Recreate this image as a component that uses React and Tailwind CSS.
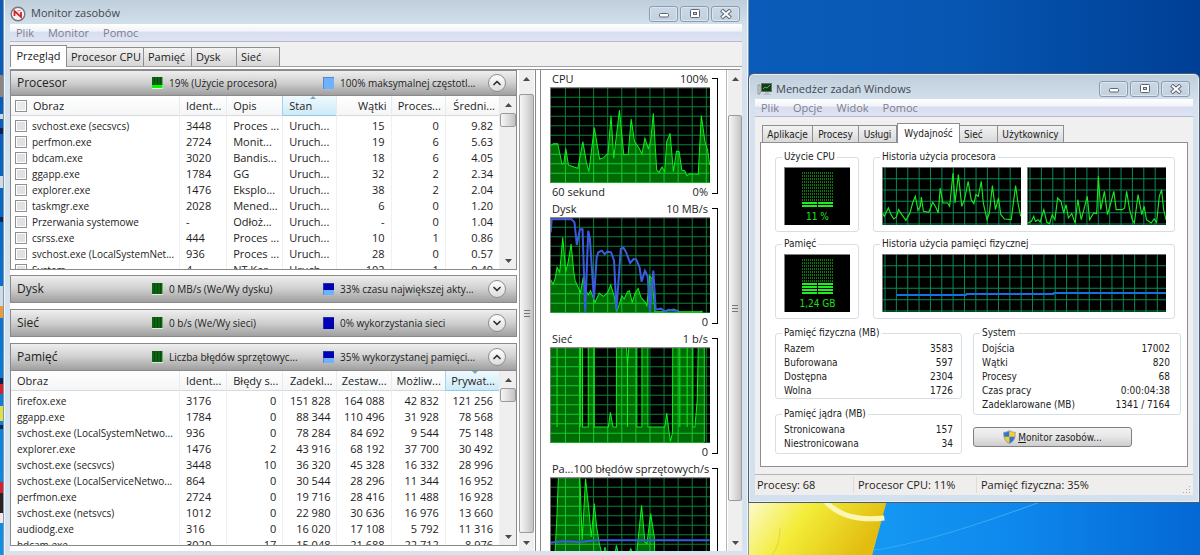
import React from 'react';
import { ChevronUp, ChevronDown } from 'lucide-react';
import clsx from 'clsx';

const processes = [
    ['svchost.exe (secsvcs)', '3448', 'Proces ...', 'Uruch...', '15', '0', '9.82'],
    ['perfmon.exe', '2724', 'Monit...', 'Uruch...', '19', '6', '5.63'],
    ['bdcam.exe', '3020', 'Bandis...', 'Uruch...', '18', '6', '4.05'],
    ['ggapp.exe', '1784', 'GG', 'Uruch...', '32', '2', '2.34'],
    ['explorer.exe', '1476', 'Eksplo...', 'Uruch...', '38', '2', '2.04'],
    ['taskmgr.exe', '2028', 'Mened...', 'Uruch...', '6', '0', '1.20'],
    ['Przerwania systemowe', '-', 'Odłoż...', 'Uruch...', '-', '0', '1.04'],
    ['csrss.exe', '444', 'Proces ...', 'Uruch...', '10', '1', '0.86'],
    ['svchost.exe (LocalSystemNet...', '936', 'Proces ...', 'Uruch...', '28', '0', '0.57'],
    ['System', '4', 'NT Ker...', 'Uruch...', '102', '1', '0.49'],
];

const memory = [
    ['firefox.exe', '3176', '0', '151 828', '164 088', '42 832', '121 256'],
    ['ggapp.exe', '1784', '0', '88 344', '110 496', '31 928', '78 568'],
    ['svchost.exe (LocalSystemNetwo...', '936', '0', '78 284', '84 692', '9 544', '75 148'],
    ['explorer.exe', '1476', '2', '43 916', '68 192', '37 700', '30 492'],
    ['svchost.exe (secsvcs)', '3448', '10', '36 320', '45 328', '16 332', '28 996'],
    ['svchost.exe (LocalServiceNetwo...', '864', '0', '30 544', '28 296', '11 344', '16 952'],
    ['perfmon.exe', '2724', '0', '19 716', '28 416', '11 488', '16 928'],
    ['svchost.exe (netsvcs)', '1012', '0', '22 980', '30 636', '16 976', '13 660'],
    ['audiodg.exe', '316', '0', '16 020', '17 108', '5 792', '11 316'],
    ['bdcam.exe', '3020', '17', '15 048', '21 688', '22 712', '8 976'],
];

const cpuLine = '152,442 160,436 173,436 186,498 191,495 197,450 205,500 215,504 233,510 248,430 258,490 266,520 282,388 298,482 310,478 323,465 332,352 340,480 357,335 370,470 383,468 392,362 402,430 415,448 424,466 433,420 443,450 450,430 458,345 468,515 475,522 484,506 492,520 498,430 508,405 518,520 527,458 535,460 543,515 552,518 558,532 566,526 592,528 601,352 612,430 620,455 626,500';
const diskLine = '63,272 70,285 76,270 82,235 90,250 99,145 108,248 115,220 124,165 132,250 136,275 145,295 152,310 160,265 166,300 175,318 182,305 195,340 208,312 220,322 232,312 242,288 252,320 260,368 268,345 275,320 282,330 292,308 298,305 306,340 315,312 324,298 332,325 345,340 350,350 358,260 365,270 374,368 400,368 430,360 445,368 508,368 512,366 516,368';
const diskBlue = '63,130 66,91 125,91 134,100 141,168 150,121 158,121 166,368 175,125 180,150 192,330 200,205 205,190 216,185 224,196 232,188 243,190 252,215 259,365 272,180 280,176 288,190 300,222 310,210 318,211 328,235 334,278 344,245 352,262 359,368 369,245 376,362 392,359 403,367 415,362 430,364 445,366';
const netLine = '62,22 82,22 82,262 82,22 150,22 151,262 152,22 158,22 158,262 175,262 175,22 193,22 193,262 235,262 241,218 249,262 259,262 259,22 289,22 292,75 292,262 292,75 296,22 320,22 320,262 335,262 335,22 353,22 353,262 403,262 409,220 415,270 420,305 426,280 427,22 448,22 448,262 448,22 470,22 470,262 470,22 487,22 487,262 493,262 500,180 503,22 521,22 521,307';
const faultLine = '76,640 82,520 86,410 150,410 157,600 167,415 178,520 184,590 193,490 200,560 208,610 214,633 220,640 225,620 230,640 255,640 259,615 265,640 295,640 302,625 308,640 320,633 334,495 344,605 350,610 361,520 372,590 374,695';
const faultBlue = '61,607 100,603 150,605 200,600 537,600';
const hist1 = '412,460 418,470 430,445 438,465 446,478 454,472 460,450 470,465 482,482 494,460 502,430 510,410 518,452 525,440 528,412 534,455 550,458 562,428 572,445 578,460 584,385 592,430 606,430 612,440 622,340 628,430 638,345 648,440 656,420 667,365 676,420 684,432 690,405 697,410 706,365 712,430 723,480 730,460 739,378 748,450 757,415 764,465 775,478 795,480 800,440 808,378 815,430 823,470';
const hist2 = '200,490 210,485 217,470 222,485 230,480 236,487 247,450 256,488 264,492 272,465 280,480 288,415 298,425 306,460 313,435 320,475 330,462 340,490 348,420 358,480 366,450 376,410 383,480 395,460 404,462 409,350 416,450 427,395 436,465 446,430 455,395 462,450 480,450 487,445 493,395 502,450 510,480 516,490 527,405 538,465 545,440 552,480 566,490 575,478 582,488 590,410 597,390 603,450 610,480';

function gridPath(x, y, w, h, dx, dy, x0 = dx, y0 = dy) {
    let d = '';
    for (let i = x0; i < w; i += dx) d += `M${x + i} ${y}v${h}`;
    for (let j = y0; j < h; j += dy) d += `M${x} ${y + j}h${w}`;
    return d;
}

function Graph({ id, x, y, line, blue }) {
    const grid = gridPath(x, y, 477, 288, 42, 28.5, 46, 31);
    const first = line.split(/[ ,]/)[0];
    const last = line.split(' ').pop().split(',')[0];
    const area = `${first},${y + 288} ${line} ${last},${y + 288}`;
    return (
        <svg viewBox={`${x} ${y} 477 288`} preserveAspectRatio="none" className="block w-full h-24 bg-black">
            <clipPath id={id}><polygon points={area} /></clipPath>
            <path d={grid} stroke="#088034" strokeWidth="3" />
            <polygon points={area} fill="#006c05" />
            <path d={grid} stroke="#16c82c" strokeWidth="3" clipPath={`url(#${id})`} />
            <polyline points={line} fill="none" stroke="#0cf018" strokeWidth="3" />
            {blue && <polyline points={blue} fill="none" stroke="#3b5be0" strokeWidth="6" />}
            <path d={`M${x} ${y + 288}V${y + 1}H${x + 477}`} fill="none" stroke="#8a8a8a" strokeWidth="5" />
        </svg>
    );
}

function GraphBlock({ title, max, left, min, ...graph }) {
    return (
        <div className="flex">
            <div className="flex-1 min-w-0">
                <div className="flex justify-between h-[17px] leading-[17px] whitespace-nowrap px-0.5">
                    <span>{title}</span>
                    <span>{max}</span>
                </div>
                <Graph {...graph} />
                <div className="flex justify-between h-[17px] leading-[17px] px-0.5">
                    <span>{left}</span>
                    <span>{min}</span>
                </div>
            </div>
            <div className="w-1.5 ml-0.5 mt-2 mb-1.5 border-y border-r border-black" />
        </div>
    );
}

function WindowButtons() {
    const cls = 'w-[29px] h-4 rounded-[3px] border border-[#8c9cb0] bg-linear-to-b from-[#cad7e4] to-[#c3d1df] shadow-[inset_0_0_0_1px_#dce6f0] flex items-center justify-center';
    return (
        <div className="flex gap-0.5">
            <button className={cls} aria-label="Minimalizuj">
                <svg width="12" height="10" viewBox="0 0 12 10"><rect x="1.5" y="4.5" width="9" height="3.5" rx="1" fill="#fff" stroke="#5c6674" /></svg>
            </button>
            <button className={cls} aria-label="Maksymalizuj">
                <svg width="12" height="10" viewBox="0 0 12 10">
                    <rect x="1.5" y="0.5" width="9" height="8" rx="1" fill="#fff" stroke="#5c6674" />
                    <rect x="4.5" y="3.5" width="3" height="2" fill="#c9d6e3" stroke="#5c6674" />
                </svg>
            </button>
            <button className={cls} aria-label="Zamknij">
                <svg width="12" height="10" viewBox="0 0 12 10">
                    <path d="M1.500 1l9 8M10.500 1l-9 8" stroke="#5c6674" strokeWidth="4" />
                    <path d="M2 1.500l8 7M10 1.500l-8 7" stroke="#fff" strokeWidth="2" />
                </svg>
            </button>
        </div>
    );
}

function MenuBar({ items }) {
    return (
        <nav className="h-[18px] shrink-0 flex items-center gap-3.5 px-1.5 bg-[linear-gradient(#fff_0%,#f2f4fb_40%,#d8def0_50%,#dfe4f4_100%)] border-b border-[#b6bac8] text-[11px] leading-4 text-[#7d7f8c]">
            {items.map((item) => <button key={item}>{item}</button>)}
        </nav>
    );
}

function Arrow({ down }) {
    return (
        <svg width="7" height="4" viewBox="0 0 7 4" className="shrink-0">
            <path d={down ? 'M0 0h7L3.5 4z' : 'M0 4h7L3.5 0z'} fill="#4a4a4a" />
        </svg>
    );
}

function ScrollBar({ thumb, pad, grip, className }) {
    return (
        <div className={clsx('shrink-0 flex flex-col items-center bg-[#efefef] pb-1.5', className)}>
            <div className="h-[17px] flex items-center"><Arrow /></div>
            <div className={clsx('flex-1 min-h-0 w-full flex flex-col', pad)}>
                <div className={clsx('w-full rounded-xs border border-[#9b9b9b] bg-linear-to-r from-[#f6f6f6] via-[#dedede] to-[#c2c2c2] flex items-center justify-center', thumb)}>
                    {grip && (
                        <span className="w-1.5 h-[7px] border-y border-[#777] flex items-center">
                            <span className="w-full h-px bg-[#777]" />
                        </span>
                    )}
                </div>
            </div>
            <Arrow down />
        </div>
    );
}

function Swatch({ kind }) {
    if (kind === 'cpu' || kind === 'green') {
        return (
            <svg width="11" height="12" viewBox="0 0 11 12" className="shrink-0">
                <rect width="11" height="12" fill="#0a6410" />
                <path d="M2.5 0v12M5.5 0v12M8.5 0v12" stroke="#0c4a10" />
                {kind === 'cpu' && <path d="M0 9.5h11" stroke="#00f800" strokeWidth="3" />}
                <path d="M0 11.5h11V0" fill="none" stroke="#d8f0d8" />
            </svg>
        );
    }
    return (
        <svg width="11" height="12" viewBox="0 0 11 12" className="shrink-0">
            <rect width="11" height="12" fill={kind === 'light' ? '#6cb2ff' : '#0000b4'} />
            {kind === 'half' && <path d="M0 9.500h11" stroke="#6cb2ff" strokeWidth="5" />}
            <path d="M0 12V0h11" fill="none" stroke="#4a6090" />
        </svg>
    );
}

function SectionHeader({ title, a, b, aText, bText, open, first }) {
    const Icon = open ? ChevronUp : ChevronDown;
    return (
        <div className={clsx('flex items-center shrink-0 border border-[#8a8a8a] bg-linear-to-b from-[#efefef] via-[#cfcfcf] to-[#9f9f9f] pl-1.5 pr-2.5 whitespace-nowrap text-[10px]', first ? 'h-[26px]' : 'h-7')}>
            <h2 className="w-[135px] text-[12px] text-[#222]">{title}</h2>
            <div className="w-[171px] flex items-center gap-1.5"><Swatch kind={a} />{aText}</div>
            <div className="flex-1 flex items-center gap-1.5"><Swatch kind={b} />{bText}</div>
            <button aria-label={title} className="size-[18px] rounded-full border border-[#8e8e8e] bg-linear-to-b from-white to-[#dcdcdc] flex items-center justify-center">
                <Icon size={12} strokeWidth={3.5} className="text-[#333]" />
            </button>
        </div>
    );
}

function ProcessTable({ columns, rows, leftCols, sorted, checks, label, height }) {
    return (
        <div className={clsx('flex border border-t-0 border-[#8a8a8a] bg-white overflow-hidden', height)}>
            <div className="flex-1 min-w-0 overflow-hidden">
                <table aria-label={label} className="w-full table-fixed border-collapse whitespace-nowrap">
                    <colgroup>
                        <col className="w-[168px]" /><col className="w-[47px]" /><col className="w-[56px]" /><col className="w-[54px]" />
                        <col className="w-[54px]" /><col className="w-[54px]" /><col className="w-[54px]" />
                    </colgroup>
                    <thead>
                        <tr>
                            {columns.map((col, i) => (
                                <th key={col} className="p-0 pb-0.5 font-normal border-r border-[#ebebeb]">
                                    <div className={clsx(
                                        'relative h-5 leading-5 bg-linear-to-b border-b',
                                        i < leftCols ? 'text-left pl-1.5' : 'text-right pr-1',
                                        i === sorted ? 'from-[#f0fafe] to-[#cdeaf7] border-[#8fcbe6] shadow-[-1px_0_0_#a3d5ea]' : 'from-white to-[#f4f5f7] border-[#d9d9d9]'
                                    )}>
                                        {i === 0 && checks ? (
                                            <label className="flex items-center gap-1.5 -ml-0.5 h-5">
                                                <input type="checkbox" className="appearance-none shrink-0 size-3 border border-[#8e8f8f] bg-[#e8e9eb] shadow-[inset_0_0_0_1px_#fff]" />
                                                {col}
                                            </label>
                                        ) : col}
                                        {i === sorted && (
                                            <svg width="6" height="3" viewBox="0 0 6 3" className="absolute top-0 left-1/2">
                                                <path d={checks ? 'M0 3h6L3 0z' : 'M0 0h6L3 3z'} fill="#7aa7bd" />
                                            </svg>
                                        )}
                                    </div>
                                </th>
                            ))}
                        </tr>
                    </thead>
                    <tbody>
                        {rows.map((row, r) => (
                            <tr key={r} className="h-4">
                                {row.map((cell, i) => (
                                    <td key={i} className={clsx('p-0 h-4 leading-4 border-r border-[#f0f0f0]', i < leftCols ? 'pl-1.5' : 'text-right pr-1.5', i === 0 && 'text-[10px]')}>
                                        {i === 0 && checks ? (
                                            <label className="flex items-center gap-[5px] -ml-0.5 h-4">
                                                <input type="checkbox" className="appearance-none shrink-0 size-3 border border-[#8e8f8f] bg-[#e0e1e4] shadow-[inset_0_0_0_1px_#fff]" />
                                                {cell}
                                            </label>
                                        ) : cell}
                                    </td>
                                ))}
                            </tr>
                        ))}
                    </tbody>
                </table>
            </div>
            <ScrollBar className="w-4" thumb="h-3.5" />
        </div>
    );
}

function ResourceMonitor() {
    const tabs = ['Procesor CPU', 'Pamięć', 'Dysk', 'Sieć'];
    const widths = ['w-[77px]', 'w-12', 'w-[45px]', 'w-[43px]'];
    return (
        <section className="absolute left-[3px] top-0 w-[746px] h-full flex flex-col px-1.5 pb-1 bg-linear-to-b from-[#bfcedb] via-[#d5e2ee] via-5% to-[#d6e3ef] border-x border-[#8496a8] shadow-[inset_1px_0_0_#eef5fb,inset_-1px_0_0_#eef5fb] text-[11px] text-[#1c1c1c] font-[Open_Sans,Noto_Sans,sans-serif]">
            <header className="h-6 shrink-0 flex items-center pr-0.5 pt-[3px]">
                <svg width="16" height="16" viewBox="0 0 16 16">
                    <circle cx="8" cy="8" r="6.8" fill="#f4f4f4" stroke="#777" strokeWidth="1.4" />
                    <path d="M4.500 10V5l6.500 6V6" fill="none" stroke="#d8202a" strokeWidth="1.8" />
                    <path d="M7.500 5l3-.5" stroke="#e87078" />
                </svg>
                <h1 className="flex-1 ml-[5px] text-[11px] text-[#3f4650]">Monitor zasobów</h1>
                <WindowButtons />
            </header>
            <MenuBar items={['Plik', 'Monitor', 'Pomoc']} />
            <div className="flex-1 min-h-0 flex flex-col bg-[#f0f0f0]">
                <div className="h-[25px] shrink-0 flex items-end border-b border-[#a0a0a0]" role="tablist">
                    <button role="tab" className="w-[57px] h-[22px] -mb-px bg-white border border-b-0 border-[#8c8e94]">Przegląd</button>
                    {tabs.map((tab, i) => (
                        <button key={tab} role="tab" className={clsx('h-[19px] text-left pl-1 whitespace-nowrap border border-l-0 border-b-0 border-[#8c8e94] bg-linear-to-b from-[#f3f3f3] to-[#d6d6d6]', widths[i])}>{tab}</button>
                    ))}
                </div>
                <div className="h-[3px] shrink-0 bg-white border-b border-[#8c8e94] mr-0.5" />
                <div className="flex-1 min-h-0 flex bg-white">
                    <div className="flex-1 min-w-0 overflow-hidden">
                        <SectionHeader first title="Procesor" a="cpu" aText="19% (Użycie procesora)" b="light" bText="100% maksymalnej częstotl..." open />
                        <ProcessTable
                            label="Procesor" checks leftCols={4} sorted={3} rows={processes} height="h-[174px]"
                            columns={['Obraz', 'Ident...', 'Opis', 'Stan', 'Wątki', 'Proces...', 'Średni...']}
                        />
                        <div className="flex flex-col gap-1.5 pt-[5px]">
                            <SectionHeader title="Dysk" a="green" aText="0 MB/s (We/Wy dysku)" b="half" bText="33% czasu największej akty..." />
                            <SectionHeader title="Sieć" a="green" aText="0 b/s (We/Wy sieci)" b="dark" bText="0% wykorzystania sieci" />
                            <SectionHeader title="Pamięć" a="green" aText="Liczba błędów sprzętowyc..." b="half" bText="35% wykorzystanej pamięci..." open />
                        </div>
                        <ProcessTable
                            label="Pamięć" leftCols={2} sorted={6} rows={memory} height="h-[175px]"
                            columns={['Obraz', 'Ident...', 'Błędy s...', 'Zadekl...', 'Zestaw...', 'Możliw...', 'Prywat...']}
                        />
                    </div>
                    <ScrollBar className="w-[15px] ml-0.5" pad="pt-[7px] pb-2" thumb="flex-1" grip />
                    <div className="w-1.5 mx-px border-x border-[#8a8a8a]" />
                    <div className="w-[185px] px-2 overflow-hidden border-r border-[#b5b5b5]">
                        <GraphBlock id="g-cpu" title="CPU" max="100%" left="60 sekund" min="0%" x={150} y={266} line={cpuLine} />
                        <GraphBlock id="g-disk" title="Dysk" max="10 MB/s" min="0" x={61} y={84} line={diskLine} blue={diskBlue} />
                        <GraphBlock id="g-net" title="Sieć" max="1 b/s" min="0" x={61} y={22} line={netLine} />
                        <GraphBlock id="g-mem" title="Pa..." max="100 błędów sprzętowych/s" min="0" x={61} y={410} line={faultLine} blue={faultBlue} />
                    </div>
                    <ScrollBar className="w-3.5 ml-px" pad="pt-7 pb-10" thumb="flex-1" grip />
                </div>
            </div>
        </section>
    );
}

function Group({ title, className, children }) {
    return (
        <fieldset className={clsx('min-w-0 border border-[#d5dfe5] rounded-[3px] px-2', className)}>
            <legend className="-ml-0.5 px-0.5 h-3.5 leading-[14px] whitespace-nowrap">{title}</legend>
            {children}
        </fieldset>
    );
}

function Meter({ value, lit }) {
    const bars = Array.from({ length: 12 }, (_, i) => i);
    return (
        <div className="mt-[3px] h-[58px] bg-black border-t border-l border-[#808080] flex flex-col items-center justify-between pt-1">
            <svg width="32" height="36" viewBox="0 0 32 36">
                {bars.map((i) => {
                    const on = i >= 12 - lit;
                    return (
                        <path
                            key={i} d={`M0 ${i * 3 + 1}h15M16 ${i * 3 + 1}h15`}
                            stroke={on ? '#1fee1f' : '#0a7a0a'} strokeWidth={on ? 2 : 2}
                            strokeDasharray={on ? undefined : '1 1'}
                        />
                    );
                })}
            </svg>
            <span className="leading-4 text-[#18e018]">{value}</span>
        </div>
    );
}

function History({ x, y, w, line, blue, className }) {
    return (
        <svg viewBox={`${x} ${y} ${w} 174`} preserveAspectRatio="none" className={clsx('block min-w-0 h-[58px] bg-black', className)}>
            <path d={gridPath(x, y, w, 174, 33.8, 34, 9, 35)} stroke="#088a52" strokeWidth="3" />
            {line && <polyline points={line} fill="none" stroke="#18e820" strokeWidth="3.4" />}
            {blue && <polyline points={blue} fill="none" stroke="#1670e0" strokeWidth="6" />}
            <path d={`M${x} ${y + 174}V${y}H${x + w}`} fill="none" stroke="#909090" strokeWidth="5" />
        </svg>
    );
}

function Stats({ rows }) {
    return (
        <dl className="pt-0.5 leading-[14px] whitespace-nowrap">
            {rows.map(([name, value]) => (
                <div key={name} className="flex justify-between"><dt>{name}</dt><dd>{value}</dd></div>
            ))}
        </dl>
    );
}

function TaskManager() {
    const tabs = ['Aplikacje', 'Procesy', 'Usługi', 'Wydajność', 'Sieć', 'Użytkownicy'];
    const widths = ['w-[51px]', 'w-[46px]', 'w-[38px]', 'w-[63px]', 'w-[38px]', 'w-[66px]'];
    return (
        <section className="absolute left-[748px] top-[73px] w-[452px] flex flex-col px-1.5 pb-[7px] rounded-t-md border border-[#4b5b6c] bg-linear-to-b from-[#bfcedb] via-[#d5e2ee] via-7% to-[#d3e0ed] shadow-[inset_0_0_0_1px_#e6eff7] text-[#1c1c1c] font-[Open_Sans,Noto_Sans,sans-serif]">
            <header className="h-[25px] shrink-0 flex items-center pr-[3px] pt-[5px]">
                <svg width="16" height="14" viewBox="0 0 16 14" className="ml-0.5">
                    <path d="M1 3h2v9H1z" fill="#d8dde0" stroke="#777" strokeWidth=".7" />
                    <rect x="4.500" y="1.500" width="10" height="8" fill="#123d1c" stroke="#667066" />
                    <path d="M6 7l2-2 2 1 3-3" fill="none" stroke="#39c03c" />
                    <path d="M8 10h4v2h2v1H6v-1h2z" fill="#b8bec2" />
                </svg>
                <h1 className="flex-1 ml-[3px] text-[11px] text-[#3f4650]">Menedżer zadań Windows</h1>
                <WindowButtons />
            </header>
            <MenuBar items={['Plik', 'Opcje', 'Widok', 'Pomoc']} />
            <div className="bg-[#f0f0f0] pt-1.5 px-[5px] pb-[7px] text-[10px] font-[DejaVu_Sans_Condensed,DejaVu_Sans,sans-serif]">
                <div className="h-[19px] flex items-end pl-0.5" role="tablist">
                    {tabs.map((tab, i) => (
                        <button
                            key={tab} role="tab"
                            className={clsx(
                                'whitespace-nowrap border border-b-0 border-[#8c8e94]', widths[i],
                                i === 3 ? 'h-5 -mb-px bg-white relative' : 'h-[17px] bg-linear-to-b from-[#f3f3f3] to-[#d9d9d9]',
                                i === 4 && 'text-left pl-1',
                                i !== 0 && i !== 3 && 'border-l-0'
                            )}
                        >{tab}</button>
                    ))}
                </div>
                <div className="border border-[#8c8e94] bg-white pt-[7px] pl-3.5 pb-3 pr-1.5">
                    <div className="grid grid-cols-[84px_1fr] gap-x-3.5 gap-y-[5px] pr-1.5">
                        <Group title="Użycie CPU" className="pb-1.5"><Meter value="11 %" lit={2} /></Group>
                        <Group title="Historia użycia procesora" className="pb-1.5">
                            <div className="flex gap-1.5 mt-[3px]">
                                <History x={411} y={322} w={413} line={hist1} className="flex-1" />
                                <History x={197} y={322} w={413} line={hist2} className="flex-1" />
                            </div>
                        </Group>
                        <Group title="Pamięć" className="pb-1.5"><Meter value="1,24 GB" lit={4} /></Group>
                        <Group title="Historia użycia pamięci fizycznej" className="pb-1.5">
                            <History x={0} y={0} w={846} blue="43,123 250,123 252,120 510,120 512,117 846,117" className="w-full mt-[3px]" />
                        </Group>
                    </div>
                    <div className="mt-[7px] flex gap-[11px] items-start">
                        <div className="w-[187px] flex flex-col gap-2">
                            <Group title="Pamięć fizyczna (MB)">
                                <Stats rows={[['Razem', '3583'], ['Buforowana', '597'], ['Dostępna', '2304'], ['Wolna', '1726']]} />
                            </Group>
                            <Group title="Pamięć jądra (MB)" className="pb-0.5">
                                <Stats rows={[['Stronicowana', '157'], ['Niestronicowana', '34']]} />
                            </Group>
                        </div>
                        <div className="flex-1 flex flex-col gap-3 items-start">
                            <Group title="System" className="w-full pb-0.5 pr-2.5">
                                <Stats rows={[['Dojścia', '17002'], ['Wątki', '820'], ['Procesy', '68'], ['Czas pracy', '0:00:04:38'], ['Zadeklarowane (MB)', '1341 / 7164']]} />
                            </Group>
                            <button className="w-[159px] h-5 rounded-[3px] border border-[#808080] bg-linear-to-b from-[#f2f2f2] via-[#e6e6e6] to-[#cdcdcd] flex items-center justify-center gap-0.5">
                                <svg width="13" height="14" viewBox="0 0 13 14">
                                    <path d="M6.500 .5C4.500 2 2.500 2.300.7 2.300.5 8 2.500 11.500 6.500 13.500z" fill="#2f76d2" />
                                    <path d="M6.500 .5c2 1.500 4 1.800 5.800 1.800.2 5.700-1.800 9.200-5.800 11.200z" fill="#f6cf2b" />
                                    <path d="M.7 6.800h5.800v6.700C3.200 12 1.200 9.500.7 6.800z" fill="#f6cf2b" />
                                    <path d="M12.300 6.800H6.500v6.700c3.300-1.500 5.300-4 5.800-6.700z" fill="#2f76d2" />
                                    <path d="M6.500 .5C4.500 2 2.500 2.300.7 2.300.5 8 2.500 11.500 6.500 13.500c4-2 6-5.500 5.800-11.200-1.800 0-3.800-.3-5.800-1.800z" fill="none" stroke="#8d99a6" strokeWidth=".8" />
                                </svg>
                                <span><u>M</u>onitor zasobów...</span>
                            </button>
                        </div>
                    </div>
                </div>
            </div>
            <footer className="h-[21px] flex items-center border-t border-[#b5b5b5] bg-[#f0eded] text-[11px] leading-4">
                <span className="w-[98px] pl-0.5">Procesy: 68</span>
                <span className="w-[123px] pl-1 border-l border-[#dcdcdc]">Procesor CPU: 11%</span>
                <span className="flex-1 pl-1 border-l border-[#dcdcdc]">Pamięć fizyczna: 35%</span>
                <svg width="8" height="8" viewBox="0 0 8 8" className="self-end mr-0.5 mb-px">
                    <path d="M6 0h1v1H6zM3 3h1v1H3zM6 3h1v1H6zM0 6h1v1H0zM3 6h1v1H3zM6 6h1v1H6z" fill="#aaa" />
                </svg>
            </footer>
        </section>
    );
}

function Wallpaper() {
    return (
        <>
            <svg viewBox="0 0 450 56" preserveAspectRatio="none" className="absolute left-[749px] right-0 bottom-0 h-14 w-[451px]">
                <defs>
                    <linearGradient id="flag" x1="0" y1="0" x2="1" y2="0.3">
                        <stop offset="0" stopColor="#fdfbd0" />
                        <stop offset="0.45" stopColor="#f3ec38" />
                        <stop offset="1" stopColor="#e2bd10" />
                    </linearGradient>
                    <linearGradient id="sky" x1="0" y1="0" x2="1" y2="0">
                        <stop offset="0.3" stopColor="#1497f2" />
                        <stop offset="0.6" stopColor="#0e87ec" />
                        <stop offset="1" stopColor="#0467d4" />
                    </linearGradient>
                </defs>
                <path d="M0 0h450v56H0z" fill="url(#sky)" />
                <path d="M0 0h138L123 56H0z" fill="url(#flag)" />
                <path d="M74 0c14 17 36 22 61 19" fill="none" stroke="#fbf6b4" strokeWidth="5" />
                <path d="M23 56c7-9 8-18 8-27" fill="none" stroke="#e3d440" />
                <path d="M124 51c50-6 130-34 174-51" fill="none" stroke="#3fabf5" />
            </svg>
            <svg viewBox="0 0 3 555" preserveAspectRatio="none" className="absolute left-0 top-0 w-[3px] h-full">
                <path d="M0 75h3v22H0z" fill="#8e8580" />
                <path d="M0 114h3v5H0zM0 176h3v12H0zM0 286h3v20H0z" fill="#cfdbe4" />
                <path d="M0 128h3v6H0zM0 217h3v5H0zM0 378h3v6H0zM0 425h3v4H0z" fill="#0a2350" />
                <path d="M0 306h3v12H0z" fill="#ec9a3c" />
                <path d="M0 384h3v10H0zM0 482h3v11H0z" fill="#d8202a" />
                <path d="M0 406h3v15H0z" fill="#dfe04a" />
                <path d="M0 493h3v20H0z" fill="#2b2420" />
                <path d="M0 513h3v10H0z" fill="#f4e6ea" />
            </svg>
        </>
    );
}

export default function App() {
    return (
        <main className="relative h-screen overflow-hidden bg-linear-to-b from-[#0a50b0] to-[#1090e8]">
            <div className="absolute inset-x-0 top-0 h-20 bg-linear-to-r from-[#0b5cba] from-62% via-[#0756b2] via-80% to-[#003f96]" />
            <Wallpaper />
            <ResourceMonitor />
            <TaskManager />
        </main>
    );
}
